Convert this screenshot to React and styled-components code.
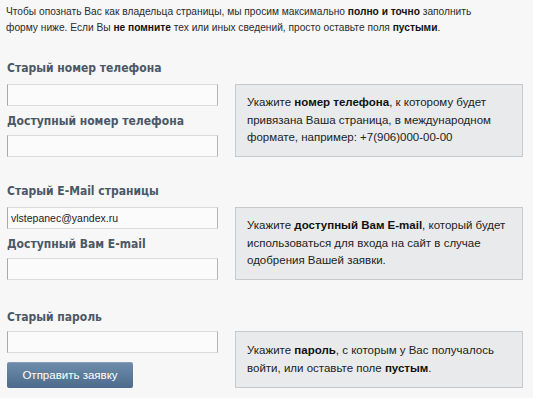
import React from "react";
import styled, { createGlobalStyle } from "styled-components";

const Global = createGlobalStyle`
  html, body { margin: 0; padding: 0; background: #f7f7f7; }
  body { font-family: "Liberation Sans", Arial, sans-serif; }
`;

const Page = styled.div`
  width: 533px;
  height: 398px;
  overflow: hidden;
  padding: 4px 0 0 6px;
  box-sizing: border-box;
  background: #f7f7f7;
`;

const Intro = styled.p`
  margin: 0 0 24px;
  font-size: 10.2px;
  line-height: 16px;
  color: #2b2b2b;
  white-space: nowrap;
  b { color: #111; }
`;

const Section = styled.div`
  display: grid;
  grid-template-columns: 211px 288px;
  grid-template-rows: auto 1fr;
  column-gap: 17px;
  margin: 0 0 ${p => p.$after}px 1px;
`;

const Label = styled.div`
  grid-column: 1;
  font-family: "DejaVu Sans Condensed", "DejaVu Sans", Tahoma, sans-serif;
  font-stretch: condensed;
  font-size: 12px;
  font-weight: bold;
  line-height: 16px;
  color: #4a5867;
  white-space: nowrap;
  margin-top: ${p => p.$mt ?? 0}px;
  margin-bottom: ${p => p.$mb ?? 8}px;
`;

const Fields = styled.div`
  grid-column: 1;
  grid-row: 2;
  display: flex;
  flex-direction: column;
`;

const Input = styled.input`
  box-sizing: border-box;
  width: 211px;
  height: 22px;
  margin: 0;
  padding: 1px 3px;
  background: #fbfbfb;
  border: 1px solid #dcdcdc;
  border-left-color: #a9a9a9;
  border-right-color: #b5b5b5;
  font-family: "Liberation Sans", Arial, sans-serif;
  font-size: 10.5px;
  color: #222;
  outline: none;
`;

const Info = styled.div`
  grid-column: 2;
  grid-row: 2;
  box-sizing: border-box;
  background: #e9eaeb;
  border: 1px solid #c8c9cb;
  padding: ${p => p.$pt ?? 9}px 10px 0 11px;
  font-size: 11.5px;
  line-height: 17.5px;
  color: #222;
  white-space: nowrap;
  b { color: #111; }
`;

const Button = styled.button`
  margin-top: 9px;
  width: 126px;
  height: 26px;
  border: none;
  border-radius: 2px;
  background: linear-gradient(#6f8dab, #4c6b8c);
  box-shadow: inset 0 1px 0 rgba(255,255,255,0.15);
  color: #fff;
  font-family: "Liberation Sans", Arial, sans-serif;
  font-size: 11.5px;
  padding: 0;
  cursor: pointer;
`;

export default function App() {
  return (
    <Page>
      <Global />
      <Intro>
        Чтобы опознать Вас как владельца страницы, мы просим максимально <b>полно и точно</b> заполнить
        <br />
        форму ниже. Если Вы <b>не помните</b> тех или иных сведений, просто оставьте поля <b>пустыми</b>.
      </Intro>

      <Section $after={26}>
        <Label>Старый номер телефона</Label>
        <Fields>
          <Input />
          <Label $mt={7} $mb={6}>Доступный номер телефона</Label>
          <Input />
        </Fields>
        <Info>
          Укажите <b>номер телефона</b>, к которому будет
          <br />
          привязана Ваша страница, в международном
          <br />
          формате, например: +7(906)000-00-00
        </Info>
      </Section>

      <Section $after={29}>
        <Label>Старый E-Mail страницы</Label>
        <Fields>
          <Input defaultValue="vlstepanec@yandex.ru" />
          <Label $mt={7} $mb={6}>Доступный Вам E-mail</Label>
          <Input />
        </Fields>
        <Info>
          Укажите <b>доступный Вам E-mail</b>, который будет
          <br />
          использоваться для входа на сайт в случае
          <br />
          одобрения Вашей заявки.
        </Info>
      </Section>

      <Section $after={0}>
        <Label $mb={6}>Старый пароль</Label>
        <Fields>
          <Input type="password" />
          <Button>Отправить заявку</Button>
        </Fields>
        <Info $pt={10}>
          Укажите <b>пароль</b>, с которым у Вас получалось
          <br />
          войти, или оставьте поле <b>пустым</b>.
        </Info>
      </Section>
    </Page>
  );
}
